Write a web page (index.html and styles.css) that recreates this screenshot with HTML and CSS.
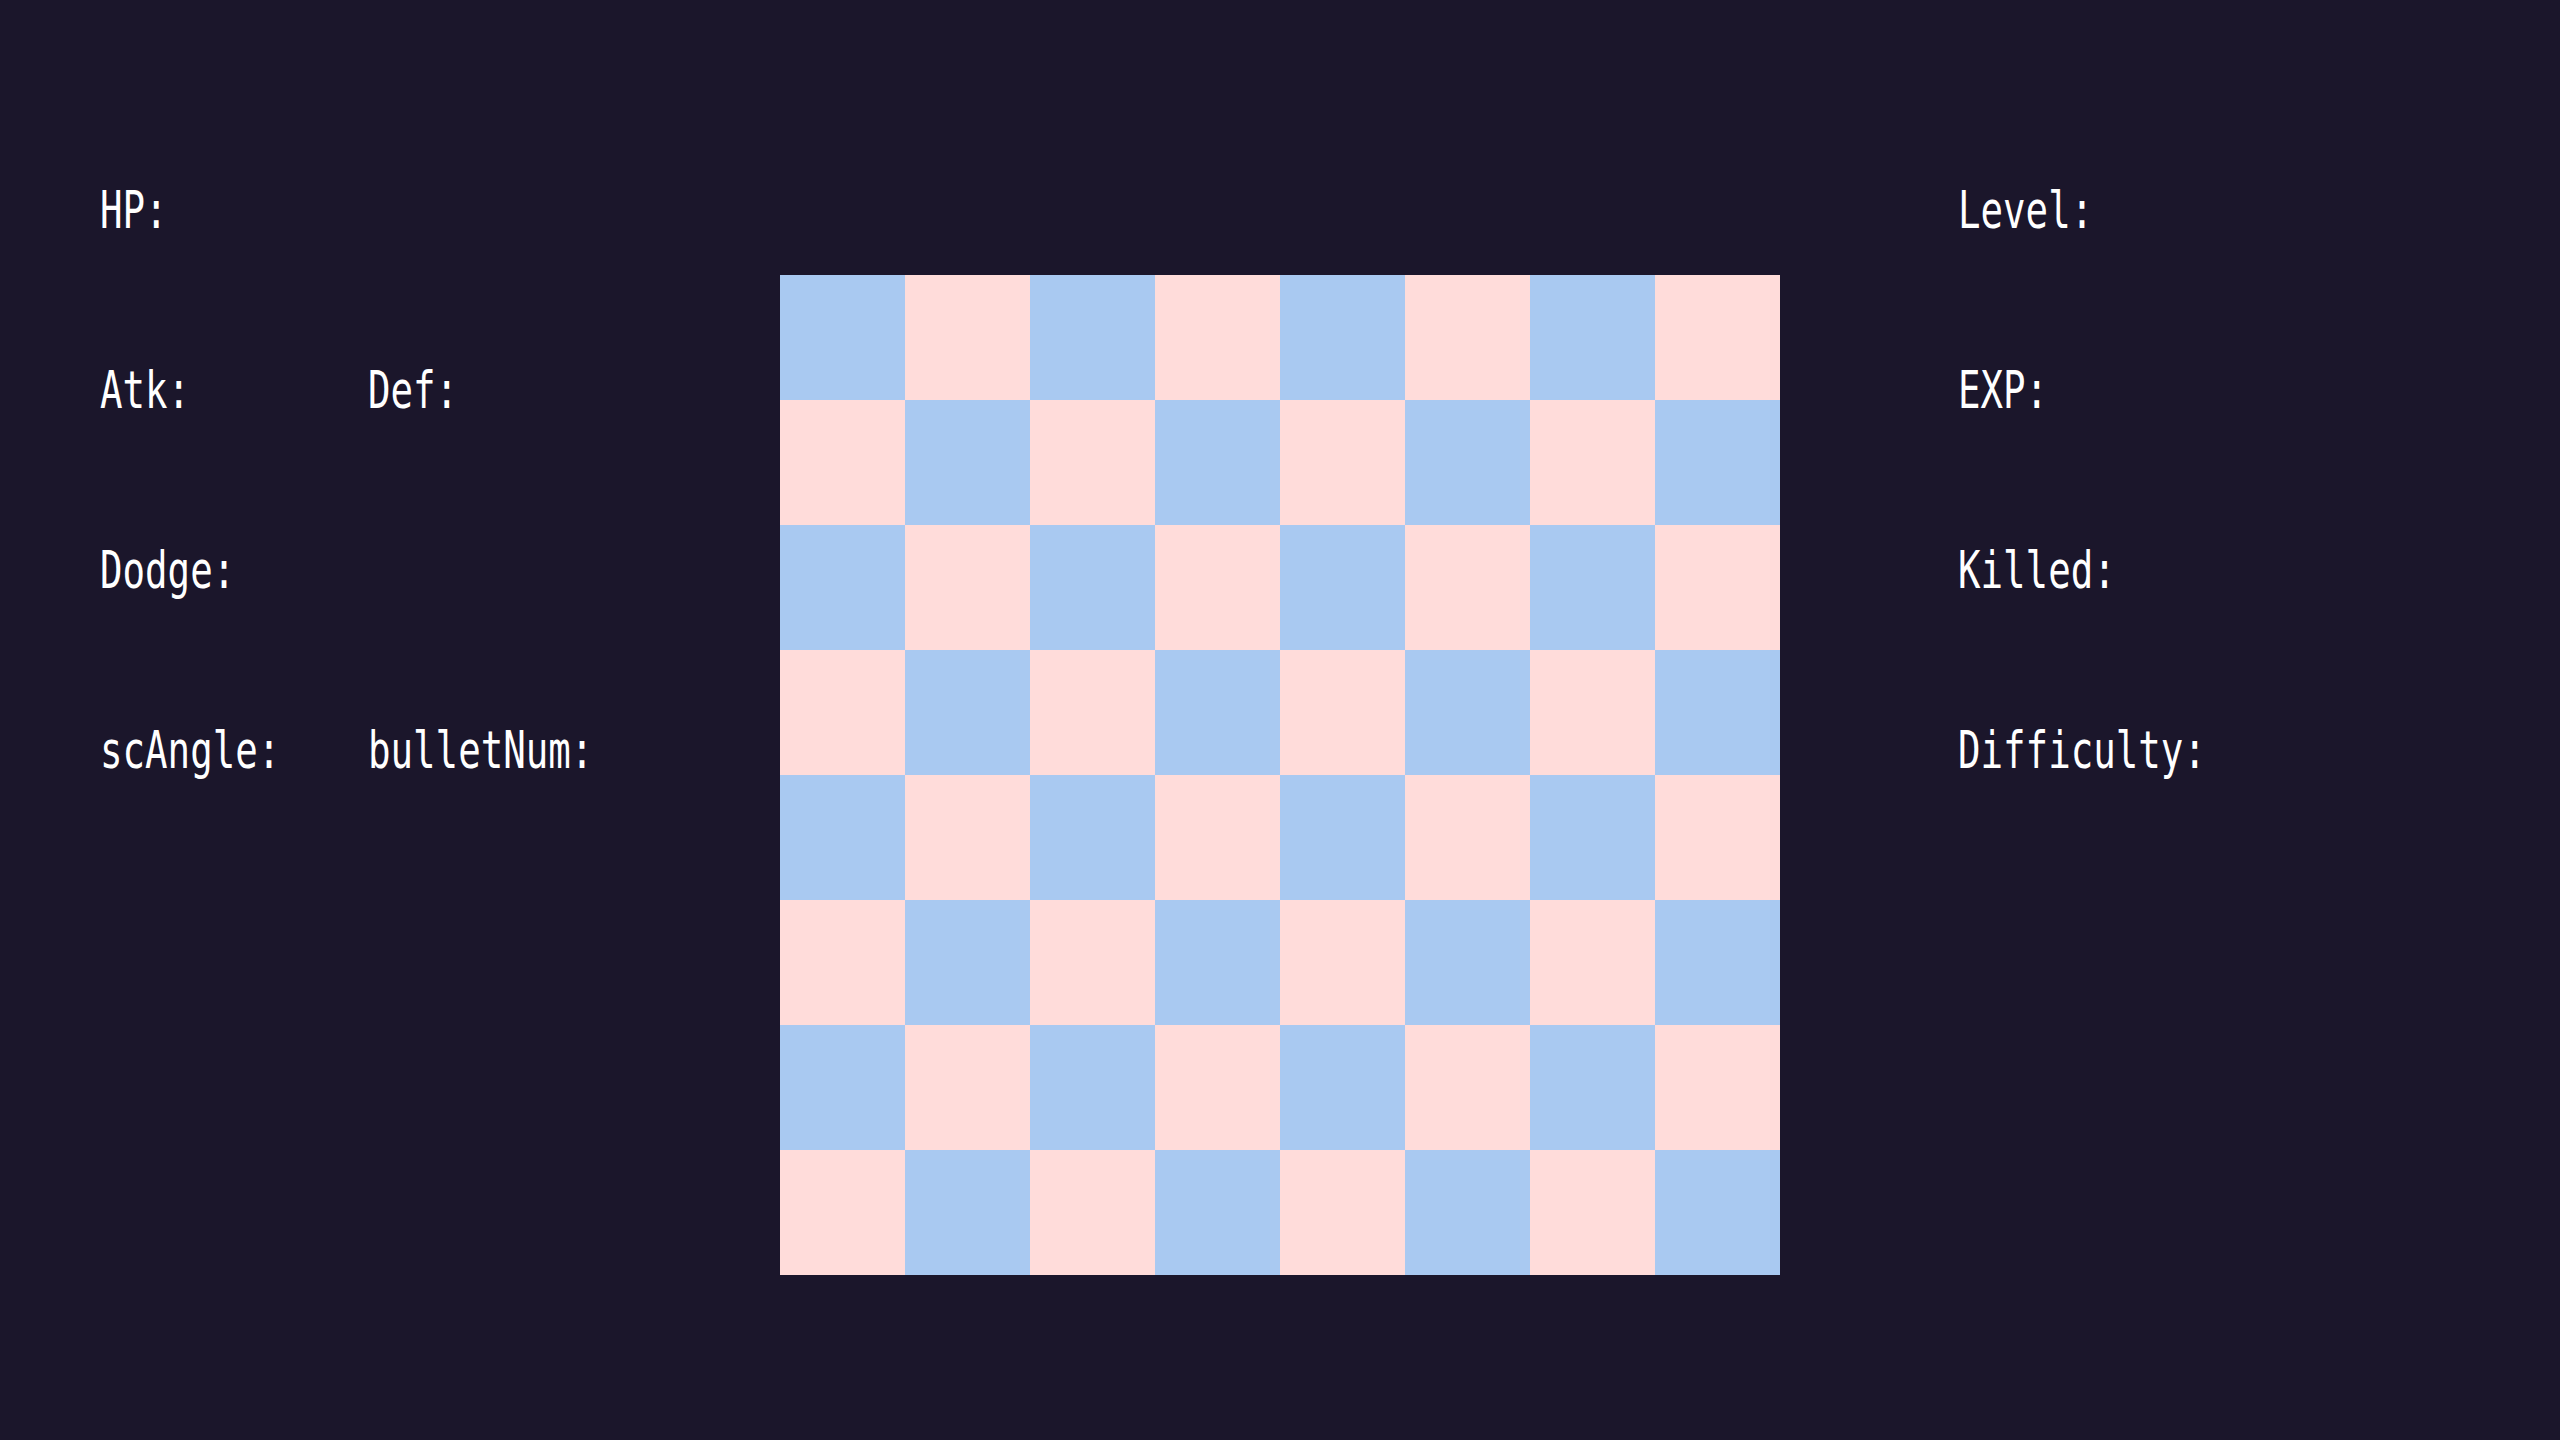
FILE: index.html
```html
<!DOCTYPE html>
<html lang="en">
  <head>
    <meta charset="UTF-8" />
    <meta name="viewport" content="width=device-width, initial-scale=1.0" />
    <title>Shooter</title>
    <link rel="stylesheet" href="styles.css">
  </head>
  <body>
    <main class="game">
      <section class="stats stats-left">
        <div class="stat-row">
          <span class="label">HP:</span>
        </div>
        <div class="stat-row">
          <span class="label">Atk:</span>
          <span class="label">Def:</span>
        </div>
        <div class="stat-row">
          <span class="label">Dodge:</span>
        </div>
        <div class="stat-row">
          <span class="label">scAngle:</span>
          <span class="label">bulletNum:</span>
        </div>
      </section>

      <section class="board" id="board">
        <div class="cell blue"></div><div class="cell pink"></div><div class="cell blue"></div><div class="cell pink"></div><div class="cell blue"></div><div class="cell pink"></div><div class="cell blue"></div><div class="cell pink"></div>
        <div class="cell pink"></div><div class="cell blue"></div><div class="cell pink"></div><div class="cell blue"></div><div class="cell pink"></div><div class="cell blue"></div><div class="cell pink"></div><div class="cell blue"></div>
        <div class="cell blue"></div><div class="cell pink"></div><div class="cell blue"></div><div class="cell pink"></div><div class="cell blue"></div><div class="cell pink"></div><div class="cell blue"></div><div class="cell pink"></div>
        <div class="cell pink"></div><div class="cell blue"></div><div class="cell pink"></div><div class="cell blue"></div><div class="cell pink"></div><div class="cell blue"></div><div class="cell pink"></div><div class="cell blue"></div>
        <div class="cell blue"></div><div class="cell pink"></div><div class="cell blue"></div><div class="cell pink"></div><div class="cell blue"></div><div class="cell pink"></div><div class="cell blue"></div><div class="cell pink"></div>
        <div class="cell pink"></div><div class="cell blue"></div><div class="cell pink"></div><div class="cell blue"></div><div class="cell pink"></div><div class="cell blue"></div><div class="cell pink"></div><div class="cell blue"></div>
        <div class="cell blue"></div><div class="cell pink"></div><div class="cell blue"></div><div class="cell pink"></div><div class="cell blue"></div><div class="cell pink"></div><div class="cell blue"></div><div class="cell pink"></div>
        <div class="cell pink"></div><div class="cell blue"></div><div class="cell pink"></div><div class="cell blue"></div><div class="cell pink"></div><div class="cell blue"></div><div class="cell pink"></div><div class="cell blue"></div>
      </section>

      <section class="stats stats-right">
        <div class="stat-row">
          <span class="label">Level:</span>
        </div>
        <div class="stat-row">
          <span class="label">EXP:</span>
        </div>
        <div class="stat-row">
          <span class="label">Killed:</span>
        </div>
        <div class="stat-row">
          <span class="label">Difficulty:</span>
        </div>
      </section>
    </main>
  </body>
</html>
```

FILE: styles.css
```css
body {
  margin: 0;
  padding: 0;
  background-color: #1b162b;
  color: #ffffff;
  font-family: "DejaVu Sans Mono", monospace;
  height: 1440px;
  overflow: hidden;
}

.game {
  display: flex;
  align-items: flex-start;
}

.stats {
  display: flex;
  flex-direction: column;
  gap: 128px;
  padding-top: 184px;
}

.stats-left {
  width: 680px;
  padding-left: 100px;
}

.stats-right {
  padding-left: 178px;
}

.stat-row {
  display: grid;
  grid-template-columns: 268px auto;
  height: 52px;
}

.label {
  display: block;
  font-size: 52px;
  line-height: 52px;
  white-space: nowrap;
  transform: scaleX(0.72);
  transform-origin: left center;
}

.board {
  display: grid;
  grid-template-columns: repeat(8, 125px);
  grid-template-rows: repeat(8, 125px);
  margin-top: 275px;
}

.cell.blue {
  background-color: #a9c9f1;
}

.cell.pink {
  background-color: #ffdcda;
}
```
